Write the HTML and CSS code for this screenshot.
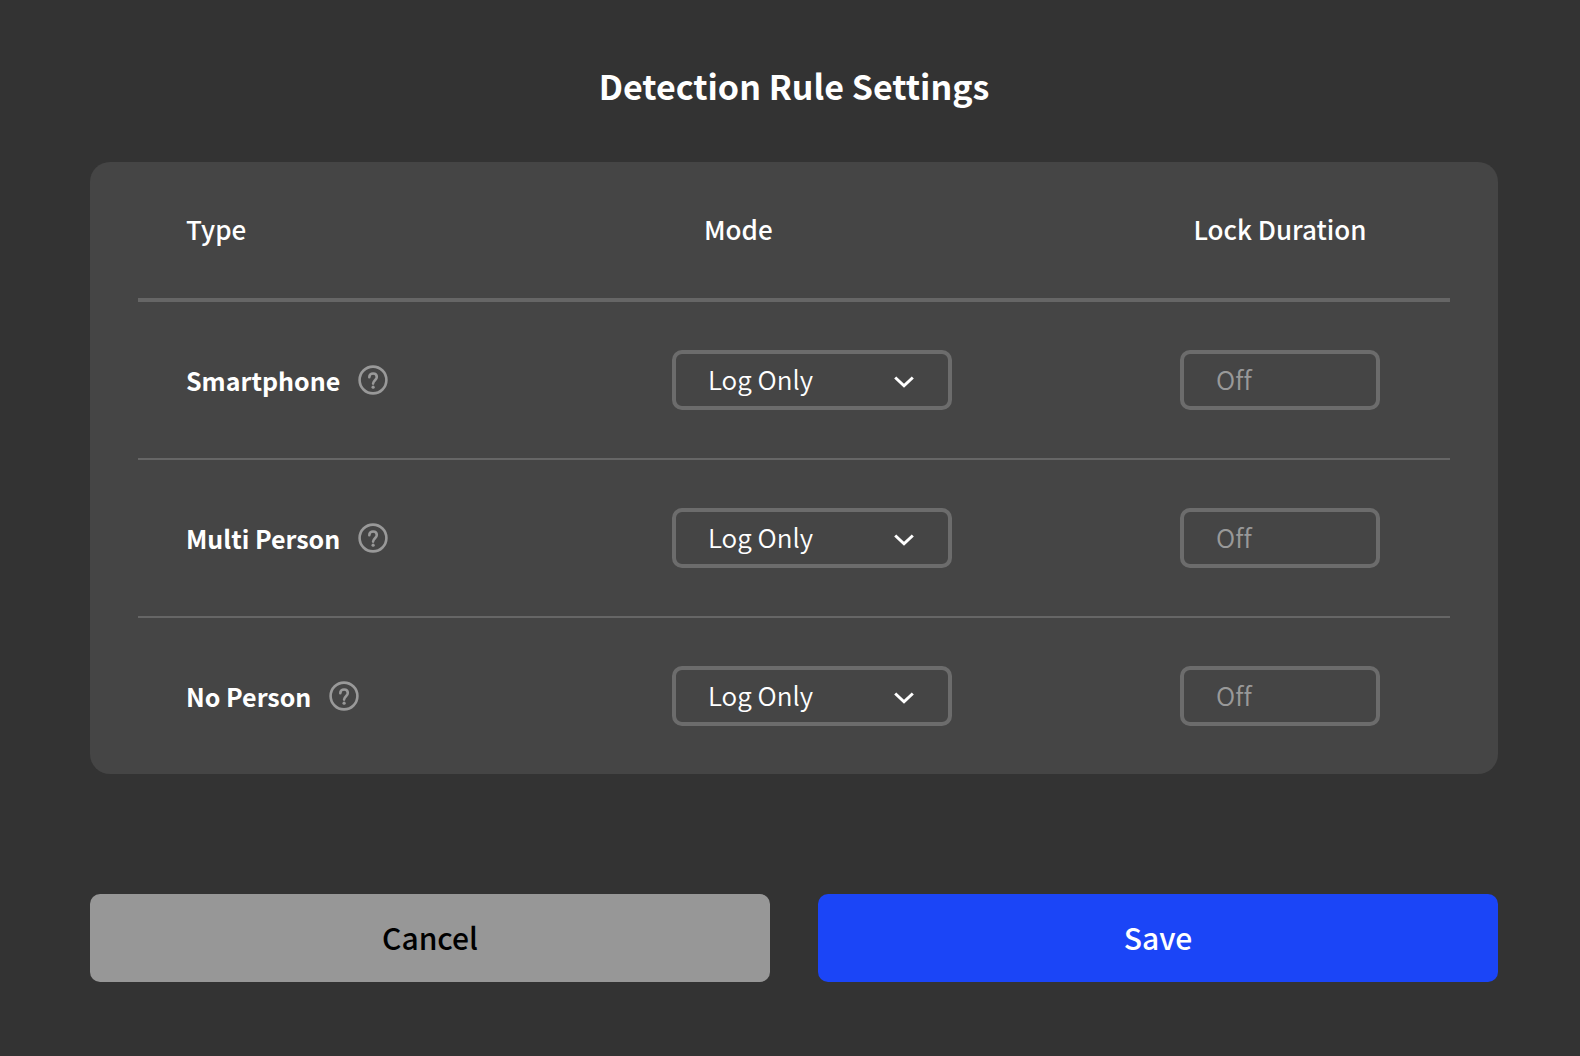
FILE: index.html
```html
<!DOCTYPE html>
<html lang="en">
<head>
  <meta charset="UTF-8">
  <meta name="viewport" content="width=device-width, initial-scale=1.0">
  <title>Detection Rule Settings</title>
  <link rel="stylesheet" href="styles.css">
</head>

<body>
  <form class="settings">
    <h1>Detection Rule Settings</h1>

    <div class="card">
      <table class="rules">
        <thead>
          <tr>
            <th class="col-type" scope="col">Type</th>
            <th class="col-mode" scope="col">Mode</th>
            <th class="col-lock" scope="col">Lock Duration</th>
          </tr>
        </thead>
        <tbody>
          <tr>
            <th class="col-type" scope="row">
              <div class="type">
                <span>Smartphone</span>
                <button class="help" type="button" aria-label="About Smartphone">
                  <svg viewBox="0 0 30 30"><circle cx="15" cy="15" r="13.4"/><path d="M11.3 12.2c0-2.3 1.5-3.7 3.8-3.7s3.7 1.4 3.7 3.5c0 3-3.7 3.4-3.7 6.6"/><circle class="dot" cx="15.1" cy="22.2" r="1.6"/></svg>
                </button>
              </div>
            </th>
            <td class="col-mode">
              <div class="select">
                <select aria-label="Smartphone mode">
                  <option>Log Only</option>
                </select>
                <svg viewBox="0 0 20 12"><path d="M1.2 1.5 10 9.8l8.8-8.3"/></svg>
              </div>
            </td>
            <td class="col-lock"><input type="text" value="Off" aria-label="Smartphone lock duration" disabled></td>
          </tr>
          <tr>
            <th class="col-type" scope="row">
              <div class="type">
                <span>Multi Person</span>
                <button class="help" type="button" aria-label="About Multi Person">
                  <svg viewBox="0 0 30 30"><circle cx="15" cy="15" r="13.4"/><path d="M11.3 12.2c0-2.3 1.5-3.7 3.8-3.7s3.7 1.4 3.7 3.5c0 3-3.7 3.4-3.7 6.6"/><circle class="dot" cx="15.1" cy="22.2" r="1.6"/></svg>
                </button>
              </div>
            </th>
            <td class="col-mode">
              <div class="select">
                <select aria-label="Multi Person mode">
                  <option>Log Only</option>
                </select>
                <svg viewBox="0 0 20 12"><path d="M1.2 1.5 10 9.8l8.8-8.3"/></svg>
              </div>
            </td>
            <td class="col-lock"><input type="text" value="Off" aria-label="Multi Person lock duration" disabled></td>
          </tr>
          <tr>
            <th class="col-type" scope="row">
              <div class="type">
                <span>No Person</span>
                <button class="help" type="button" aria-label="About No Person">
                  <svg viewBox="0 0 30 30"><circle cx="15" cy="15" r="13.4"/><path d="M11.3 12.2c0-2.3 1.5-3.7 3.8-3.7s3.7 1.4 3.7 3.5c0 3-3.7 3.4-3.7 6.6"/><circle class="dot" cx="15.1" cy="22.2" r="1.6"/></svg>
                </button>
              </div>
            </th>
            <td class="col-mode">
              <div class="select">
                <select aria-label="No Person mode">
                  <option>Log Only</option>
                </select>
                <svg viewBox="0 0 20 12"><path d="M1.2 1.5 10 9.8l8.8-8.3"/></svg>
              </div>
            </td>
            <td class="col-lock"><input type="text" value="Off" aria-label="No Person lock duration" disabled></td>
          </tr>
        </tbody>
      </table>
    </div>

    <div class="actions">
      <button class="btn btn-cancel" type="button">Cancel</button>
      <button class="btn btn-save" type="submit">Save</button>
    </div>
  </form>
</body>
</html>
```
FILE: styles.css
```css
* {
  box-sizing: border-box;
}

body {
  margin: 0;
  background: #333;
  color: #fff;
  font-family: "Noto Sans CJK KR", "Noto Sans", sans-serif;
  font-size: 26px;
  font-variant-ligatures: none;
}

button,
input,
select {
  font-family: inherit;
  font-size: inherit;
  font-variant-ligatures: inherit;
}

.settings {
  padding: 56px 82px 74px 90px;
}

h1 {
  margin: 0 0 46px;
  font-size: 34px;
  line-height: 60px;
  font-weight: 700;
  text-align: center;
}

.card {
  padding: 0 48px;
  border-radius: 20px;
  background: #454545;
}

.rules {
  width: 100%;
  border-spacing: 0;
  table-layout: fixed;
}

.rules th,
.rules td {
  padding: 0;
  text-align: left;
}

.rules thead th {
  height: 140px;
  border-bottom: 4px solid #666;
  padding-bottom: 4px;
  font-weight: 500;
}

.rules tbody th,
.rules tbody td {
  height: 158px;
  border-bottom: 2px solid #666;
}

.rules tbody tr:last-child th,
.rules tbody tr:last-child td {
  height: 156px;
  border-bottom: none;
}

.rules .col-type {
  padding-left: 48px;
}

.rules .col-mode {
  width: 508px;
}

.rules .col-lock {
  width: 270px;
}

.rules thead .col-mode {
  padding-left: 32px;
}

.rules thead .col-lock {
  padding-right: 70px;
  text-align: center;
}

.type {
  display: flex;
  align-items: center;
  gap: 18px;
  font-size: 25px;
  font-weight: 700;
}

.help {
  display: block;
  width: 30px;
  height: 30px;
  border: none;
  padding: 0;
  background: none;
  cursor: pointer;
}

.help svg {
  display: block;
  fill: none;
  stroke: #999;
  stroke-width: 2.6;
  stroke-linecap: round;
}

.help .dot {
  fill: #999;
  stroke: none;
}

.select {
  position: relative;
  width: 280px;
}

.select select,
.col-lock input {
  display: block;
  height: 60px;
  margin: 0;
  border: 4px solid #6c6c6c;
  border-radius: 10px;
  padding: 0 32px 4px;
  background: transparent;
  color: #fff;
  font-weight: 350;
}

.select select {
  width: 100%;
  appearance: none;
  cursor: pointer;
}

.select option {
  background: #454545;
}

.select svg {
  position: absolute;
  top: 26px;
  right: 38px;
  width: 20px;
  height: 12px;
  fill: none;
  stroke: #fff;
  stroke-width: 3;
  pointer-events: none;
}

.col-lock input {
  width: 200px;
  color: #999;
}

.actions {
  display: grid;
  grid-template-columns: 1fr 1fr;
  gap: 48px;
  margin-top: 120px;
}

.btn {
  height: 88px;
  border: none;
  border-radius: 10px;
  padding: 0 0 2px;
  font-size: 30px;
  font-weight: 500;
  cursor: pointer;
}

.btn-cancel {
  background: #979797;
  color: #000;
}

.btn-save {
  background: #1b45f7;
  color: #fff;
}
```
